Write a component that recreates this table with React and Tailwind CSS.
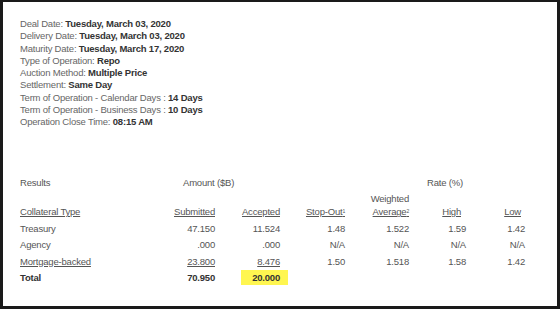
import React from "react";

const details = [
  ["Deal Date: ", "Tuesday, March 03, 2020"],
  ["Delivery Date: ", "Tuesday, March 03, 2020"],
  ["Maturity Date: ", "Tuesday, March 17, 2020"],
  ["Type of Operation: ", "Repo"],
  ["Auction Method: ", "Multiple Price"],
  ["Settlement: ", "Same Day"],
  ["Term of Operation - Calendar Days : ", "14 Days"],
  ["Term of Operation - Business Days : ", "10 Days"],
  ["Operation Close Time: ", "08:15 AM"],
];

const rows = [
  { type: "Treasury", link: false, vals: ["47.150", "11.524", "1.48", "1.522", "1.59", "1.42"] },
  { type: "Agency", link: false, vals: [".000", ".000", "N/A", "N/A", "N/A", "N/A"] },
  { type: "Mortgage-backed", link: true, vals: ["23.800", "8.476", "1.50", "1.518", "1.58", "1.42"] },
];

const cols = "grid grid-cols-[130px_65px_65px_65px_64px_57px_59px]";

export default function App() {
  return (
    <div
      className="w-[560px] h-[309px] bg-white border-t-2 border-l-[3px] border-r-[3px] border-b-[3px] border-[#1a1a1a] overflow-hidden"
      style={{ fontFamily: '"Liberation Sans", Arial, sans-serif' }}
    >
      {/* Operation details */}
      <div className="pl-[17px] pt-[16px] text-[9.5px] tracking-[-0.2px] leading-[12.25px] text-[#666]">
        {details.map(([label, value]) => (
          <div key={label}>
            {label}
            <span className="font-bold text-[#333]">{value}</span>
          </div>
        ))}
      </div>

      {/* Results table */}
      <div className="pl-[17px] mt-[48px] text-[9.5px] tracking-[-0.2px] text-[#555]">
        <div className={`${cols} leading-[13px]`}>
          <div>Results</div>
          <div className="col-span-2 pl-[33px]">Amount ($B)</div>
          <div className="col-span-4 pl-[147px]">Rate (%)</div>
        </div>

        <div className={`${cols} mt-[3px] leading-[13px] items-end`}>
          <div className="underline">Collateral Type</div>
          <div className="text-right underline">Submitted</div>
          <div className="text-right underline">Accepted</div>
          <div className="text-right underline">
            Stop-Out<sup className="text-[5px]">1</sup>
          </div>
          <div className="text-right">
            <div>Weighted</div>
            <div className="underline">
              Average<sup className="text-[5px]">2</sup>
            </div>
          </div>
          <div className="text-right underline pr-[5px]">High</div>
          <div className="text-right underline pr-[4px]">Low</div>
        </div>

        <div className="mt-[1.5px]">
          {rows.map((r) => (
            <div key={r.type} className={`${cols} h-[16.5px] items-center leading-[13px]`}>
              <div className={r.link ? "underline" : ""}>{r.type}</div>
              {r.vals.map((v, i) => (
                <div key={i} className={`text-right ${r.link && i < 2 ? "underline" : ""}`}>
                  {v}
                </div>
              ))}
            </div>
          ))}

          <div className={`${cols} h-[16.5px] items-center leading-[13px] font-bold text-[#333]`}>
            <div>Total</div>
            <div className="text-right">70.950</div>
            <div className="flex justify-end">
              <span className="bg-[#fff650] pl-[11px] pr-[8px] -mr-[8px] h-[15px] leading-[15px]">20.000</span>
            </div>
          </div>
        </div>
      </div>
    </div>
  );
}
